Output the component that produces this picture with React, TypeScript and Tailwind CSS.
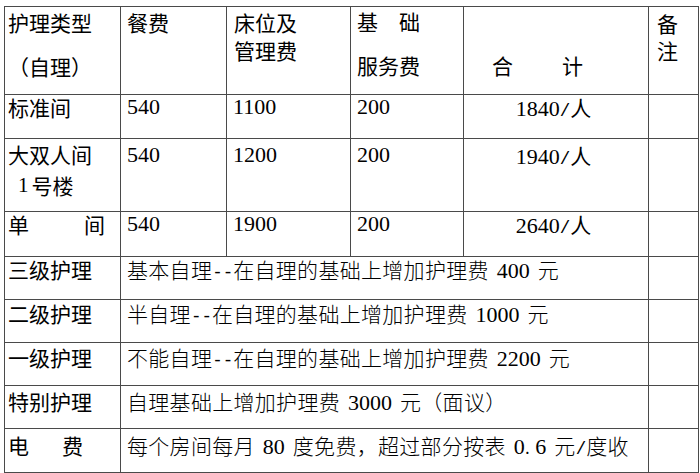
import React from "react";

const CJK = "font-['Noto_Sans_CJK_SC',sans-serif]";
const SERIF = "font-['Liberation_Serif','Noto_Sans_CJK_SC',serif]";

function Num({ children }: { children: React.ReactNode }) {
  return <span className={`${SERIF} text-[22px] tracking-normal`}>{children}</span>;
}

function Sp() {
  return <span className="inline-block w-[8px]"></span>;
}

function Dash() {
  return <span className="font-['Liberation_Mono',monospace] text-[17.5px] tracking-normal">--</span>;
}

function Slash() {
  return <span className="font-['Liberation_Mono',monospace] text-[17.5px] tracking-normal">/</span>;
}

export default function App() {
  const cell = "bg-white text-[21px] text-black";
  const body = `${cell} ${CJK} pl-[6px] leading-[24px] font-light text-[#1a1a1a] col-span-4 whitespace-nowrap tracking-[0.3px]`;
  const label = `${cell} ${CJK} pl-[3px] leading-[24px]`;
  const num = `bg-white text-black ${SERIF} text-[22px] pl-[6px] leading-[24px]`;
  const total = `bg-white text-black ${SERIF} text-[22px] leading-[24px] text-center pr-[5px]`;
  return (
    <div className="w-[700px] h-[473px] bg-white overflow-hidden">
      <div className="ml-[4px] mt-[6px] w-[695px] grid grid-cols-[115px_105px_123px_112px_184px_49px] grid-rows-[87px_43px_72px_44px_42px_42px_42px_42px_43px] gap-px p-px bg-[#4a4a4a]">
        {/* header */}
        <div className={`${cell} ${CJK} pl-[3px] pt-[1px] leading-[28px]`}>
          <div>护理类型</div>
          <div className="mt-[16px]">（自理）</div>
        </div>
        <div className={`${cell} ${CJK} pl-[6px] pt-[1px] leading-[28px]`}>餐费</div>
        <div className={`${cell} ${CJK} pl-[7px] pt-[1px] leading-[28px]`}>
          <div>床位及</div>
          <div>管理费</div>
        </div>
        <div className={`${cell} ${CJK} pl-[6px] leading-[28px]`}>
          <div>基　础</div>
          <div className="mt-[16px]">服务费</div>
        </div>
        <div className={`${cell} ${CJK} pl-[28px] pt-[44px] leading-[28px]`}>
          <div className="flex gap-[49px]">
            <span>合</span>
            <span>计</span>
          </div>
        </div>
        <div className={`${cell} ${CJK} pl-[8px] pt-[3px] leading-[27px] break-all`}>
          备注
        </div>

        {/* 标准间 */}
        <div className={label}>标准间</div>
        <div className={num}>540</div>
        <div className={num}>1100</div>
        <div className={num}>200</div>
        <div className={total}>
          1840<Slash />
          <span className={`${CJK} text-[21px]`}>人</span>
        </div>
        <div className="bg-white"></div>

        {/* 大双人间 */}
        <div className={`${cell} ${CJK} pl-[3px] leading-[31px]`}>
          <div>大双人间</div>
          <div className="pl-[10px] flex">
            <span className={`${SERIF}`}>1</span>
            <span className="ml-[3px]">号楼</span>
          </div>
        </div>
        <div className={`${num} pt-[4px]`}>540</div>
        <div className={`${num} pt-[4px]`}>1200</div>
        <div className={`${num} pt-[4px]`}>200</div>
        <div className={`${total} pt-[4px]`}>
          1940<Slash />
          <span className={`${CJK} text-[21px]`}>人</span>
        </div>
        <div className="bg-white"></div>

        {/* 单间 */}
        <div className={`${label} flex gap-[55px] items-start`}>
          <span>单</span>
          <span>间</span>
        </div>
        <div className={num}>540</div>
        <div className={num}>1900</div>
        <div className={num}>200</div>
        <div className={total}>
          2640<Slash />
          <span className={`${CJK} text-[21px]`}>人</span>
        </div>
        <div className="bg-white"></div>

        {/* 三级护理 */}
        <div className={label}>三级护理</div>
        <div className={body}>
          基本自理<Dash />在自理的基础上增加护理费<Sp /><Num>400</Num><Sp />元
        </div>
        <div className="bg-white"></div>

        {/* 二级护理 */}
        <div className={`${label} pt-[1px]`}>二级护理</div>
        <div className={`${body} pt-[1px]`}>
          半自理<Dash />在自理的基础上增加护理费<Sp /><Num>1000</Num><Sp />元
        </div>
        <div className="bg-white"></div>

        {/* 一级护理 */}
        <div className={`${label} pt-[2px]`}>一级护理</div>
        <div className={`${body} pt-[2px]`}>
          不能自理<Dash />在自理的基础上增加护理费<Sp /><Num>2200</Num><Sp />元
        </div>
        <div className="bg-white"></div>

        {/* 特别护理 */}
        <div className={`${label} pt-[3px]`}>特别护理</div>
        <div className={`${body} pt-[3px]`}>
          自理基础上增加护理费<Sp /><Num>3000</Num><Sp />元（面议）
        </div>
        <div className="bg-white"></div>

        {/* 电费 */}
        <div className={`${label} pt-[4px] flex gap-[33px] items-start`}>
          <span>电</span>
          <span>费</span>
        </div>
        <div className={`${body} pt-[4px]`}>
          每个房间每月<Sp /><Num>80</Num><Sp />度免费，超过部分按表<Sp /><Num>0</Num>
          <span className="inline-block w-[10.5px]">.</span>
          <Num>6</Num><Sp />元<Slash />度收
        </div>
        <div className="bg-white"></div>
      </div>
    </div>
  );
}
